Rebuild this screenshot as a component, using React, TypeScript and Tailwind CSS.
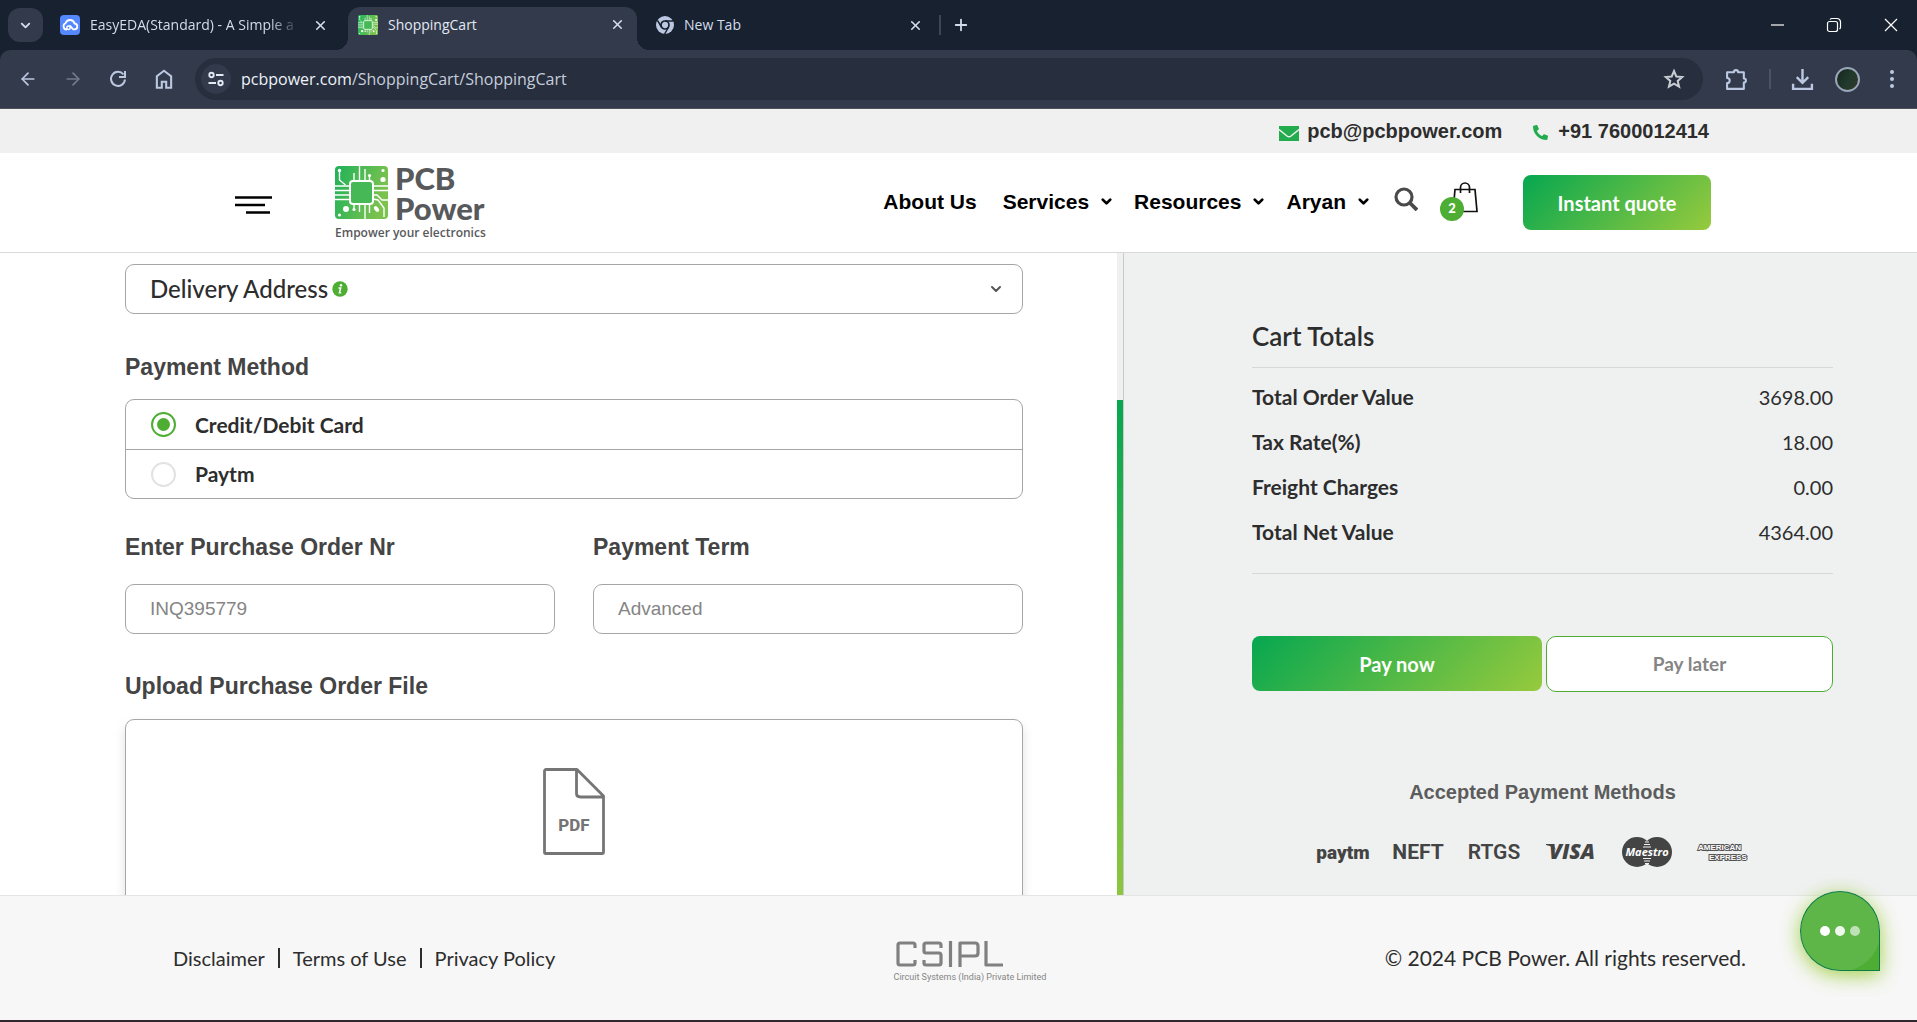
import React from "react";
import { ArrowLeft, ArrowRight, ChevronDown, Plus, X } from "lucide-react";
import { FaPhoneAlt } from "react-icons/fa";

const ui = "font-['Open_Sans',sans-serif]";
const arial = "font-['Liberation_Sans',Arial,sans-serif]";
const jost = "font-['Lato',sans-serif]";

function CloudIcon() {
  return (
    <svg viewBox="0 0 20 20" className="size-5 shrink-0" aria-hidden="true">
      <rect width="20" height="20" rx="4" fill="#5588ff" />
      <path
        d="M6.500 14.500a3.300 3.300 0 0 1-1-6.300 4.700 4.700 0 0 1 9 .3 3 3 0 0 1 .5 5.900h-1.700L10 11"
        fill="none"
        stroke="#fff"
        strokeWidth="1.800"
        strokeLinecap="round"
        strokeLinejoin="round"
      />
      <circle cx="8.500" cy="12.700" r="1.700" fill="none" stroke="#fff" strokeWidth="1.500" />
    </svg>
  );
}

function ChipIcon({ className, id }: { className: string; id: string }) {
  return (
    <svg viewBox="0 0 53 53" className={className} aria-hidden="true">
      <defs>
        <linearGradient id={id} x1="0" y1="0" x2="1" y2="0.3">
          <stop offset="0" stopColor="#1fb25a" />
          <stop offset="1" stopColor="#7cc24e" />
        </linearGradient>
      </defs>
      <rect width="53" height="53" rx="4" fill={`url(#${id})`} />
      <g fill="none" stroke="#fff" strokeWidth="1.400">
        <path d="M4.500 5v9l6 5M19 15V7M24.500 15V0M30 15V3M34.500 15v-5" />
        <path d="M0 20h15M0 24.500h15M0 29h15M0 33.500h15M38 20h15M38 24.500h15M38 29h4l5 5h6" />
        <path d="M19 38v5M24.500 38v8M30 38v15M34.500 38v9M38 33l5 1 6 8v9" />
        <rect x="15" y="15" width="23" height="23" rx="3" fill="#47b856" strokeWidth="2" />
      </g>
      <g fill="#fff">
        <circle cx="4.500" cy="4.500" r="1.700" />
        <circle cx="48" cy="4.500" r="1.600" />
        <circle cx="48" cy="13.500" r="2.600" />
        <circle cx="34.500" cy="9.500" r="1.600" />
        <circle cx="11" cy="43" r="3" />
        <circle cx="19" cy="43.500" r="1.600" />
        <circle cx="4.500" cy="49" r="1.600" />
        <ellipse cx="41.500" cy="43" rx="3.200" ry="2" transform="rotate(50 41.500 43)" />
      </g>
    </svg>
  );
}

function ChromeIcon() {
  return (
    <svg viewBox="0 0 18 18" className="size-[18px] shrink-0" aria-hidden="true">
      <circle cx="9" cy="9" r="9" fill="#bcc8e2" />
      <circle cx="9" cy="9" r="4" fill="#bcc8e2" stroke="#182130" strokeWidth="1.700" />
      <path d="M9 4.900h8M5.400 11 1.500 4.400M12.600 11l-4 7" stroke="#182130" strokeWidth="1.500" />
    </svg>
  );
}

function TabClose({ label }: { label: string }) {
  return (
    <button aria-label={label} className="grid size-6 place-items-center text-[#d3dcec]">
      <X size={15} strokeWidth={2.600} />
    </button>
  );
}

function TabStrip() {
  return (
    <div className="flex h-[50px] items-center bg-[#182130] text-sm text-[#d3dcec]">
      <button aria-label="Search tabs" className="ml-2 grid h-[34px] w-[35px] place-items-center rounded-xl bg-[#323a4b]">
        <ChevronDown size={15} strokeWidth={3} />
      </button>
      <div className="ml-[17px] flex w-[272px] items-center">
        <CloudIcon />
        <span className="ml-2.5 flex-1 overflow-hidden whitespace-nowrap [mask-image:linear-gradient(to_right,#000_85%,transparent)]">
          EasyEDA(Standard) - A Simple a
        </span>
        <span className="ml-2"><TabClose label="Close EasyEDA" /></span>
      </div>
      <span className="ml-1 size-3 self-end bg-[radial-gradient(circle_at_0_0,#182130_12px,#323a4b_12px)]" />
      <div className="flex h-[43px] w-[289px] items-center self-end rounded-t-xl bg-[#323a4b] pr-2 pb-2 pl-2.5">
        <ChipIcon id="tab-chip" className="size-5 shrink-0" />
        <span className="ml-2.5 flex-1 text-[#e3e9f4]">ShoppingCart</span>
        <TabClose label="Close ShoppingCart" />
      </div>
      <span className="size-3 self-end bg-[radial-gradient(circle_at_100%_0,#182130_12px,#323a4b_12px)]" />
      <div className="ml-[7px] flex w-[271px] items-center">
        <ChromeIcon />
        <span className="ml-2.5 flex-1">New Tab</span>
        <TabClose label="Close New Tab" />
      </div>
      <span className="ml-3 h-5 w-0.5 bg-[#3d4659]" />
      <button aria-label="New tab" className="ml-2 grid size-6 place-items-center">
        <Plus size={18} strokeWidth={2.400} />
      </button>
      <div className="mr-[17px] ml-auto flex items-center gap-[39px] text-white">
        <button aria-label="Minimize">
          <svg viewBox="0 0 18 18" className="size-[18px]"><path d="M3 9h13" stroke="currentColor" strokeWidth="1.200" /></svg>
        </button>
        <button aria-label="Restore">
          <svg viewBox="0 0 18 18" className="size-[18px]" fill="none" stroke="currentColor" strokeWidth="1.200">
            <rect x="2.500" y="5.500" width="10" height="10" rx="2" />
            <path d="M5 3.500A2.500 2.500 0 0 1 7 2.500h5a3.500 3.500 0 0 1 3.500 3.500v5a2 2 0 0 1-1 2" />
          </svg>
        </button>
        <button aria-label="Close window">
          <svg viewBox="0 0 18 18" className="size-[18px]"><path d="m3 3 12 12M15 3 3 15" stroke="currentColor" strokeWidth="1.200" /></svg>
        </button>
      </div>
    </div>
  );
}

function Toolbar() {
  return (
    <div className="bg-[#182130]">
      <div className="flex h-[59px] items-center rounded-t-[10px] border-b border-[#514f58] bg-[#323a4b] text-[#bcc8e2]">
        <div className="ml-[18px] flex items-center gap-[25px]">
          <button aria-label="Back"><ArrowLeft size={20} strokeWidth={2} /></button>
          <button aria-label="Forward" className="text-[#727b8e]"><ArrowRight size={20} strokeWidth={2} /></button>
          <button aria-label="Reload">
            <svg viewBox="0 0 20 20" className="size-5" fill="none" stroke="currentColor" strokeWidth="2">
              <path d="M15.500 5.500A7 7 0 1 0 17 10.500" />
              <path d="M17 2v6h-6" />
            </svg>
          </button>
          <button aria-label="Home">
            <svg viewBox="0 0 20 20" className="size-[22px]" fill="none" stroke="currentColor" strokeWidth="1.900">
              <path d="M3.500 18V7.500L10 2.500l6.500 5V18h-4.500v-5.500H8V18z" />
            </svg>
          </button>
        </div>
        <div className="ml-5 flex h-[42px] flex-1 items-center rounded-full bg-[#272e3d] pr-[18px] pl-1.5">
          <button aria-label="Site information" className="grid size-[30px] shrink-0 place-items-center rounded-full bg-[#323a4b] text-[#e3e9f4]">
            <svg viewBox="0 0 18 18" className="size-[18px]" fill="none" stroke="currentColor" strokeWidth="1.900">
              <circle cx="4.500" cy="5" r="2.200" />
              <path d="M9 5h7.500M1.500 13H9" />
              <circle cx="13.500" cy="13" r="2.200" />
            </svg>
          </button>
          <span className="ml-2.5 flex-1 text-base text-[#c5cddb]">
            <span className="text-[#eef2f9]">pcbpower.com</span>/ShoppingCart/ShoppingCart
          </span>
          <button aria-label="Bookmark this page" className="text-[#c9ccd2]">
            <svg viewBox="0 0 22 22" className="size-[22px]" fill="none" stroke="currentColor" strokeWidth="2">
              <path d="m11 3 2.300 5.500 5.900.5-4.500 3.900 1.400 5.800-5.100-3.100-5.100 3.100 1.400-5.800L2.800 9l5.900-.500z" />
            </svg>
          </button>
        </div>
        <div className="mr-4 ml-[22px] flex items-center">
          <button aria-label="Extensions">
            <svg viewBox="0 0 22 22" className="size-[23px]" fill="none" stroke="currentColor" strokeWidth="2" strokeLinejoin="round">
              <path d="M2 4h6.500a2 2 0 0 1 4 0H18v6a2 2 0 0 1 0 4v6H2v-5.500a2.500 2.500 0 0 0 0-5z" />
            </svg>
          </button>
          <span className="ml-[21px] h-5 w-0.5 bg-[#4a5366]" />
          <button aria-label="Downloads" className="ml-5">
            <svg viewBox="0 0 22 22" className="size-[23px]" fill="none" stroke="currentColor" strokeWidth="2.300">
              <path d="M11 1v13M5.500 8.800 11 14.200l5.500-5.400M2 15v5h18v-5" />
            </svg>
          </button>
          <button aria-label="Profile" className="ml-[21px] size-[25px] rounded-full border-2 border-[#9aa5b8] bg-[linear-gradient(120deg,#16261f,#203a2c_55%,#33372a)]" />
          <button aria-label="Menu" className="ml-[23px]">
            <svg viewBox="0 0 18 20" className="h-5 w-[18px]" fill="currentColor">
              <circle cx="9" cy="3" r="2" /><circle cx="9" cy="10" r="2" /><circle cx="9" cy="17" r="2" />
            </svg>
          </button>
        </div>
      </div>
    </div>
  );
}

function NavLink({ label, menu }: { label: string; menu?: boolean }) {
  return (
    <a href="#" className="flex items-center gap-2.5">
      {label}
      {menu && <ChevronDown size={15} strokeWidth={4.500} />}
    </a>
  );
}

function SiteHeader() {
  return (
    <header className={arial}>
      <div className="flex h-11 items-center justify-end bg-[#f0f0f0] pr-[208px] text-xl font-bold text-[#2d2d2d]">
        <a href="mailto:pcb@pcbpower.com" className="flex items-center gap-2">
          <svg viewBox="0 0 20 15" className="mt-1 h-[15px] w-5" aria-hidden="true">
            <rect width="20" height="15" fill="#22ac4e" />
            <path d="m0 3.500 8 6.500q2 1.500 4 0l8-6.500" fill="none" stroke="#f0f0f0" strokeWidth="1.500" />
          </svg>
          pcb@pcbpower.com
        </a>
        <a href="tel:+917600012414" className="ml-[31px] flex items-center gap-2.5">
          <FaPhoneAlt size={15} className="mt-0.5 scale-x-[-1] rotate-90 text-[#22ac4e]" />
          +91 7600012414
        </a>
      </div>
      <div className="flex h-[100px] items-center border-b border-[#d9d9d9] bg-white pr-[206px] pl-[235px]">
        <button aria-label="Open menu" className="mt-1">
          <svg viewBox="0 0 37 18" className="h-[18px] w-[37px]"><path d="M0 1.500h37M0 9h30M11 16.500h24" stroke="#000" strokeWidth="2.600" /></svg>
        </button>
        <a href="#" aria-label="PCB Power home" className="mb-1 ml-[63px] flex flex-col gap-1 text-[#58595b]">
          <span className="flex items-center gap-[7px]">
            <ChipIcon id="logo-chip" className="size-[53px]" />
            <span className={`${jost} text-[31px] leading-[30px] font-black`}>PCB<br />Power</span>
          </span>
          <span className="font-['Open_Sans',sans-serif] text-xs leading-3 font-semibold">Empower your electronics</span>
        </a>
        <nav className="mt-[-2px] ml-auto flex items-center text-[21px] font-bold text-black">
          <NavLink label="About Us" />
          <span className="ml-[26px]"><NavLink label="Services" menu /></span>
          <span className="ml-5"><NavLink label="Resources" menu /></span>
          <span className="ml-5"><NavLink label="Aryan" menu /></span>
        </nav>
        <button aria-label="Search" className="ml-[23px] text-[#4a4a4a]">
          <svg viewBox="0 0 24 24" className="mb-2 size-6" fill="none" stroke="currentColor">
            <circle cx="10" cy="10" r="8" strokeWidth="3.200" />
            <path d="m16 16 7 7" strokeWidth="3.800" />
          </svg>
        </button>
        <button aria-label="Cart, 2 items" className="relative mb-3 ml-[34px]">
          <svg viewBox="0 0 26 32" className="h-8 w-[26px]" fill="none" stroke="#111" strokeWidth="1.700">
            <path d="M3 8.500h20l2 22H1zM8.500 12V6.500a4.500 4.500 0 0 1 9 0V12" />
          </svg>
          <span className={`${jost} absolute top-4 -left-3 grid size-6 place-items-center rounded-full bg-[#4dae33] text-[13px] font-black text-white`}>2</span>
        </button>
        <button className={`${jost} ml-[45px] h-[55px] w-[188px] rounded-lg bg-[linear-gradient(135deg,#06a750,#97ca3d)] text-xl font-bold text-white`}>
          Instant quote
        </button>
      </div>
    </header>
  );
}

const label = `${arial} block text-[23px] leading-7 font-bold text-[#444]`;
const field = `${arial} h-[50px] w-full rounded-[9px] border border-[#a6a6a6] px-6 text-[19px] text-[#333] placeholder:text-[#858585]`;
const radio =
  "grid size-[25px] appearance-none place-items-center rounded-full border-2 border-[#e2e2e2] before:size-[13px] before:rounded-full checked:border-[#4dae33] checked:before:bg-[#4dae33]";

function OrderForm() {
  return (
    <form className="min-w-0 flex-1 overflow-hidden bg-white pt-[11px] pr-[94px] pl-[125px]">
      <button type="button" className={`${jost} flex h-[50px] w-full items-center rounded-[9px] border border-[#a6a6a6] pr-[18px] pl-6 text-2xl font-medium text-[#2d2d2d]`}>
        Delivery Address
        <svg viewBox="0 0 16 16" className="ml-1 size-4" aria-hidden="true">
          <circle cx="8" cy="8" r="7.700" fill="#4dae33" />
          <path d="M6.500 7h2.200l-1.300 4.800h1.800" fill="none" stroke="#fff" strokeWidth="1.500" />
          <circle cx="9" cy="4.300" r="1.200" fill="#fff" />
        </svg>
        <ChevronDown size={16} strokeWidth={3} className="ml-auto text-[#555]" />
      </button>

      <fieldset className="mt-[39px]">
        <legend className={label}>Payment Method</legend>
        <div className={`${jost} mt-[18px] divide-y divide-[#a6a6a6] rounded-[9px] border border-[#a6a6a6] text-[21px] font-bold text-[#2d2d2d]`}>
          <label className="flex h-[50px] items-center gap-[19px] pl-[25px]">
            <input type="radio" name="method" defaultChecked className={radio} />
            Credit/Debit Card
          </label>
          <label className="flex h-12 items-center gap-[19px] pl-[25px]">
            <input type="radio" name="method" className={radio} />
            Paytm
          </label>
        </div>
      </fieldset>

      <div className="mt-[34px] grid grid-cols-2 gap-[38px]">
        <div>
          <label htmlFor="po" className={label}>Enter Purchase Order Nr</label>
          <input id="po" placeholder="INQ395779" className={`${field} mt-[23px]`} />
        </div>
        <div>
          <label htmlFor="term" className={label}>Payment Term</label>
          <input id="term" placeholder="Advanced" className={`${field} mt-[23px]`} />
        </div>
      </div>

      <label htmlFor="po-file" className={`${label} mt-[38px]`}>Upload Purchase Order File</label>
      <label htmlFor="po-file" className="mt-[19px] flex h-[260px] justify-center rounded-[9px] border border-[#a6a6a6] pt-12 shadow-[0_6px_12px_rgba(0,0,0,0.12)]">
        <svg viewBox="0 0 62 87" className="h-[87px] w-[62px]" aria-label="PDF file">
          <path d="M3 1.500h31L60.500 28v56.500a1 1 0 0 1-1 1H2.500a1 1 0 0 1-1-1V3a1.500 1.500 0 0 1 1.500-1.500zM33.500 2v23.500q0 3.500 4 3.500H60" fill="none" stroke="#757575" strokeWidth="2.800" strokeLinejoin="round" />
          <text x="31" y="63" textAnchor="middle" fontSize="17" fontWeight="800" fill="#757575" className="font-['Roboto',sans-serif]">PDF</text>
        </svg>
        <input id="po-file" type="file" className="sr-only" />
      </label>
    </form>
  );
}

const totals = [
  ["Total Order Value", "3698.00"],
  ["Tax Rate(%)", "18.00"],
  ["Freight Charges", "0.00"],
  ["Total Net Value", "4364.00"],
];

function CartTotals() {
  return (
    <aside className={`${jost} w-[794px] overflow-hidden border-l border-[#c9c9c9] bg-[#eff1f1] pt-[65px] pr-[84px] pl-32 text-[#2d2d2d]`}>
      <h2 className="text-[26px] leading-9 font-semibold">Cart Totals</h2>
      <table className="mt-[13px] w-full border-y border-[#d6d8d8] text-[21px]">
        <tbody className="before:block before:h-1.5 after:block after:h-[19px]">
          {totals.map(([name, value]) => (
            <tr key={name} className="h-[45px]">
              <th scope="row" className="text-left font-bold">{name}</th>
              <td className="text-right text-xl">{value}</td>
            </tr>
          ))}
        </tbody>
      </table>
      <div className="mt-[62px] flex gap-1 text-xl font-bold">
        <button className="h-[55px] w-[290px] rounded-lg bg-[linear-gradient(135deg,#06a750,#97ca3d)] text-white">Pay now</button>
        <button className="h-14 flex-1 rounded-[10px] border border-[#4dae33] bg-white text-[19px] text-[#858585]">Pay later</button>
      </div>
      <p className={`${arial} mt-[86px] text-center text-xl leading-7 font-bold text-[#5c5c5c]`}>Accepted Payment Methods</p>
      <div className="mt-[31px] flex items-center justify-center gap-[26px] pr-[19px] text-[#444]">
        <PayLogo label="Paytm"><text x="25" y="22" textAnchor="middle" fontSize="19" fontWeight="900" className="font-['Roboto',sans-serif]">paytm</text></PayLogo>
        <PayLogo label="NEFT"><text x="24" y="22" textAnchor="middle" fontSize="21" fontWeight="700" className="font-['Roboto',sans-serif]">NEFT</text></PayLogo>
        <PayLogo label="RTGS"><text x="24" y="22" textAnchor="middle" fontSize="21" fontWeight="600" className="font-['Roboto',sans-serif]">RTGS</text></PayLogo>
        <PayLogo label="Visa"><text x="26" y="22" textAnchor="middle" fontSize="21" fontWeight="800" fontStyle="italic" className="font-['Open_Sans',sans-serif]">VISA</text><path d="M0 7h7l3 6Q6 9 0 8z" /></PayLogo>
        <PayLogo label="Maestro">
          <circle cx="15" cy="15" r="15" /><circle cx="35" cy="15" r="15" />
          <path d="M23 5h4M22 7.500h6M21 10h8M21 21.500h8M22 24h6M23 26.500h4" stroke="#eff1f1" strokeWidth="1.200" />
          <text x="25" y="19" textAnchor="middle" fontSize="11" fontWeight="700" fontStyle="italic" fill="#fff" className="font-['Open_Sans',sans-serif]">Maestro</text>
        </PayLogo>
        <PayLogo label="American Express">
          <g fill="#fff" stroke="#555" strokeWidth="2" paintOrder="stroke" fontSize="8" fontWeight="700" className="font-['Liberation_Sans',sans-serif]">
            <text x="0" y="13">AMERICAN</text>
            <text x="11" y="23">EXPRESS</text>
          </g>
        </PayLogo>
      </div>
    </aside>
  );
}

function PayLogo({ label, children }: { label: string; children: React.ReactNode }) {
  return (
    <svg viewBox="0 0 50 30" className="h-[30px] w-[50px] overflow-visible" fill="currentColor" role="img" aria-label={label}>
      {children}
    </svg>
  );
}

function Footer() {
  return (
    <footer className={`${jost} flex h-[127px] items-center justify-between border-t border-b-2 border-t-[#e4e6e6] border-b-[#33272f] bg-[#f7f7f7] pr-[171px] pl-[173px] text-xl text-[#2d2d2d]`}>
      <nav className="flex items-center gap-[13px]">
        <a href="#">Disclaimer</a>
        <span className="h-5 w-0.5 bg-[#2d2d2d]" />
        <a href="#">Terms of Use</a>
        <span className="h-5 w-0.5 bg-[#2d2d2d]" />
        <a href="#">Privacy Policy</a>
      </nav>
      <div role="img" aria-label="CSIPL" className="mt-2 flex flex-col items-start gap-1">
        <svg viewBox="0 0 110 26" className="ml-0.5 h-[26px] w-[110px]" fill="none" stroke="#808080" strokeWidth="3.200" strokeLinejoin="round">
          <path d="M19 7V4q0-2-2-2H4Q2 2 2 4v18q0 2 2 2h13q2 0 2-2v-3" />
          <path d="M45 7V4q0-2-2-2H30q-2 0-2 2v6q0 2 2 2h13q2 0 2 2.500V22q0 2-2 2H30q-2 0-2-2v-3" />
          <path d="M54.500 0v26M64 26V2h15q3 0 3 3v7q0 3-3 3H64M90 0v24h17" />
        </svg>
        <span className="font-['Roboto',sans-serif] text-[9px] leading-3 text-[#858585]">Circuit Systems (India) Private Limited</span>
      </div>
      <p className="text-[21px]">© 2024 PCB Power. All rights reserved.</p>
    </footer>
  );
}

export default function App() {
  return (
    <div className={`${ui} relative flex h-screen flex-col overflow-hidden`}>
      <TabStrip />
      <Toolbar />
      <SiteHeader />
      <main className="flex min-h-0 flex-1">
        <OrderForm />
        <div className="flex w-1.5 flex-col bg-[#f0f0f0]">
          <div className="h-[147px]" />
          <div className="flex-1 bg-[linear-gradient(to_bottom,#06a750,#8dc63f)]" />
        </div>
        <CartTotals />
      </main>
      <Footer />
      <button
        aria-label="Open chat"
        className="absolute right-[37px] bottom-[51px] grid size-20 place-items-center overflow-visible rounded-full rounded-br-md border border-[#0d7a4a] bg-[radial-gradient(circle,#5eb548_40px,#4dae33_41px)] shadow-[0_4px_20px_rgba(141,198,30,0.8)]"
      >
        <svg viewBox="0 0 42 12" className="h-3 w-[42px]" fill="#fff">
          <circle cx="6" cy="6" r="5" /><circle cx="21" cy="6" r="5" opacity=".9" /><circle cx="36" cy="6" r="5" opacity=".6" />
        </svg>
      </button>
    </div>
  );
}
